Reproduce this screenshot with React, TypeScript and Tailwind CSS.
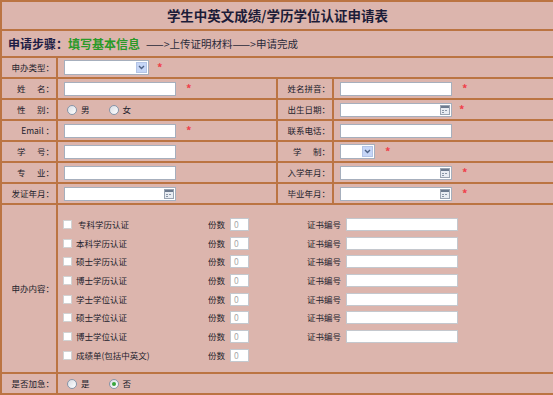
import React from 'react';

const items = [
  { name: ' 专科学历认证', cert: true },
  { name: '本科学历认证', cert: true },
  { name: '硕士学历认证', cert: true },
  { name: '博士学历认证', cert: true },
  { name: '学士学位认证', cert: true },
  { name: '硕士学位认证', cert: true },
  { name: '博士学位认证', cert: true },
  { name: '成绩单(包括中英文)', cert: false },
];

function CalIcon() {
  return (
    <svg width="10" height="10" viewBox="0 0 10 10" className="absolute right-[1px] top-[1px]">
      <rect x="0.5" y="0.5" width="9" height="9" fill="#e8ecf2" stroke="#9aa4b2" />
      <rect x="1" y="1" width="8" height="2" fill="#6c7a8e" />
      <rect x="2" y="5" width="2" height="1" fill="#8a96a6" />
      <rect x="5" y="5" width="2" height="1" fill="#8a96a6" />
      <rect x="2" y="7" width="2" height="1" fill="#8a96a6" />
    </svg>
  );
}

function TextBox({ w, cal }: { w: string; cal?: boolean }) {
  return (
    <div className={`relative h-[14px] shrink-0 border border-[#a6afbd] bg-white ${w}`}>
      {cal && <CalIcon />}
    </div>
  );
}

function Select({ w }: { w: string }) {
  return (
    <div className={`flex h-[15px] shrink-0 justify-end border border-[#a6afbd] bg-white p-px ${w}`}>
      <div className="flex w-[11px] items-center justify-center border border-[#b3c4e6] bg-[#c6d6f7]">
        <svg width="7" height="5" viewBox="0 0 7 5">
          <path d="M1 1 L3.5 3.5 L6 1" fill="none" stroke="#4d6185" strokeWidth="1.4" />
        </svg>
      </div>
    </div>
  );
}

function Star({ ml }: { ml: string }) {
  return <span className={`text-[11px] leading-none font-bold text-[#f0404a] ${ml}`}>*</span>;
}

function Radio({ checked }: { checked?: boolean }) {
  return (
    <span className="flex h-[10px] w-[10px] shrink-0 items-center justify-center rounded-full border border-[#8696aa] bg-[linear-gradient(135deg,#d9dde3,#ffffff)]">
      {checked && <span className="h-[4px] w-[4px] rounded-full bg-[#37a63a]" />}
    </span>
  );
}

function Label({ text }: { text: string }) {
  return (
    <div className="flex w-[56px] shrink-0 items-center justify-end border-r-2 border-[#bb7442] pr-[2px] whitespace-pre">
      {text}
    </div>
  );
}

function Half({ label, children, right }: { label: string; children: React.ReactNode; right?: boolean }) {
  return (
    <>
      <Label text={label} />
      <div className={`flex items-center pl-[6px] ${right ? 'flex-1' : 'w-[220px] shrink-0 border-r-2 border-[#bb7442]'}`}>
        {children}
      </div>
    </>
  );
}

function Row({ children }: { children: React.ReactNode }) {
  return <div className="flex h-[21px] border-b-2 border-[#bb7442]">{children}</div>;
}

export default function App() {
  return (
    <div className="h-[395px] w-[553px] overflow-hidden bg-[#dcb5ad] font-['Noto_Sans_CJK_SC','Liberation_Sans',sans-serif] text-[8.5px] text-[#22222c]">
      <div className="border-l-2 border-t-2 border-[#bb7442]">
        <div className="flex h-[29px] items-center justify-center border-b-2 border-[#bb7442] text-[13.5px] font-bold text-[#1c1c38]">
          学生中英文成绩/学历学位认证申请表
        </div>
        <div className="flex h-[27px] items-center border-b-2 border-[#bb7442] pl-[6px]">
          <span className="text-[12px] font-bold text-[#1c1c44]">申请步骤：</span>
          <span className="text-[12px] font-bold text-[#2a9a28]">填写基本信息</span>
          <span className="ml-[6px] text-[10.5px] text-[#2a2a3a]">——&gt;上传证明材料——&gt;申请完成</span>
        </div>

        <Row>
          <Label text="申办类型：" />
          <div className="flex items-center pl-[6px]">
            <Select w="w-[85px]" />
            <Star ml="ml-[8px]" />
          </div>
        </Row>
        <Row>
          <Half label="姓      名：">
            <TextBox w="w-[112px]" />
            <Star ml="ml-[10px]" />
          </Half>
          <Half label="姓名拼音：" right>
            <TextBox w="w-[112px]" />
            <Star ml="ml-[10px]" />
          </Half>
        </Row>
        <Row>
          <Half label="性      别：">
            <span className="ml-[3px] flex items-center gap-[4px]">
              <Radio />男
            </span>
            <span className="ml-[19px] flex items-center gap-[4px]">
              <Radio />女
            </span>
          </Half>
          <Half label="出生日期：" right>
            <TextBox w="w-[112px]" cal />
            <Star ml="ml-[7px]" />
          </Half>
        </Row>
        <Row>
          <Half label="Email ：">
            <TextBox w="w-[112px]" />
            <Star ml="ml-[10px]" />
          </Half>
          <Half label="联系电话：" right>
            <TextBox w="w-[112px]" />
          </Half>
        </Row>
        <Row>
          <Half label="学      号：">
            <TextBox w="w-[112px]" />
          </Half>
          <Half label="学      制：" right>
            <Select w="w-[35px]" />
            <Star ml="ml-[10px]" />
          </Half>
        </Row>
        <Row>
          <Half label="专      业：">
            <TextBox w="w-[112px]" />
          </Half>
          <Half label="入学年月：" right>
            <TextBox w="w-[112px]" cal />
            <Star ml="ml-[10px]" />
          </Half>
        </Row>
        <Row>
          <Half label="发证年月：">
            <TextBox w="w-[112px]" cal />
          </Half>
          <Half label="毕业年月：" right>
            <TextBox w="w-[112px]" cal />
            <Star ml="ml-[10px]" />
          </Half>
        </Row>

        <div className="flex h-[169px] border-b-2 border-[#bb7442]">
          <Label text="申办内容：" />
          <div className="flex flex-col pl-[5px] pt-[10px]">
            {items.map((it) => (
              <div key={it.name} className="flex h-[18.7px] items-center">
                <span className="h-[9px] w-[9px] shrink-0 border border-[#d2d2d2] bg-white" />
                <span className="ml-[4px] w-[132px] shrink-0 whitespace-pre">{it.name}</span>
                <span className="w-[22px] shrink-0">份数</span>
                <span className="flex h-[13px] w-[19px] shrink-0 items-center border border-[#c4c8ce] bg-white pl-[3px] text-[#a8a8a8]">
                  0
                </span>
                {it.cert && (
                  <>
                    <span className="ml-[58px] w-[39px] shrink-0">证书编号</span>
                    <span className="h-[13px] w-[112px] shrink-0 border border-[#c4c8ce] bg-white" />
                  </>
                )}
              </div>
            ))}
          </div>
        </div>

        <div className="flex h-[21px] border-b-2 border-[#bb7442]">
          <Label text="是否加急：" />
          <div className="flex items-center pl-[9px]">
            <span className="flex items-center gap-[4px]">
              <Radio />是
            </span>
            <span className="ml-[19px] flex items-center gap-[4px]">
              <Radio checked />否
            </span>
          </div>
        </div>
      </div>
    </div>
  );
}
